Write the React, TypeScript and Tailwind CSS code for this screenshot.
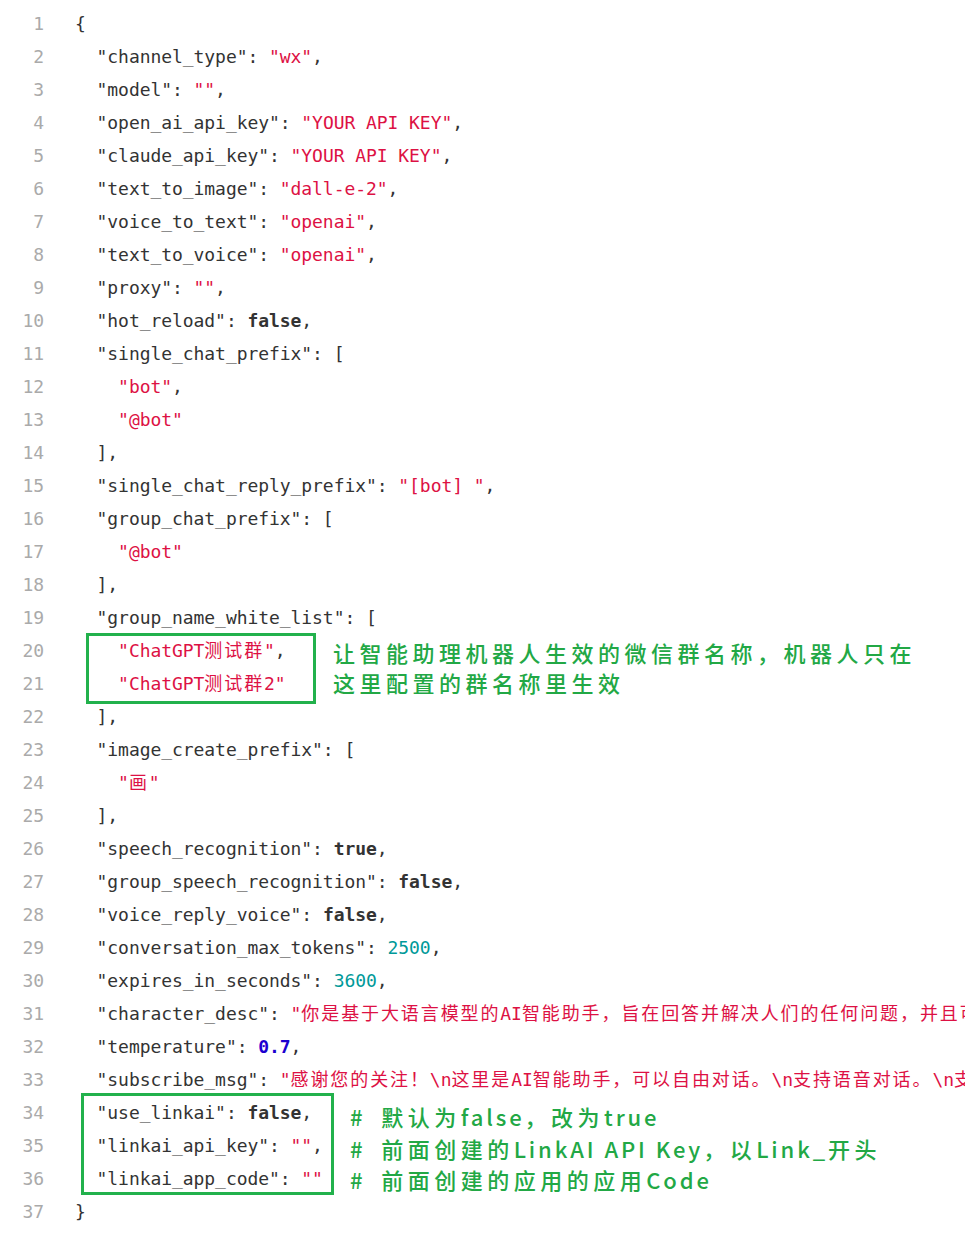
import React from 'react';

type Tok = { t: string; c?: 'k' | 's' | 'n' | 'b' | 'kw' };

// helpers for building tokens
const k = (t: string): Tok => ({ t, c: 'k' });
const s = (t: string): Tok => ({ t, c: 's' });
const n = (t: string): Tok => ({ t, c: 'n' });
const b = (t: string): Tok => ({ t, c: 'b' });
const kw = (t: string): Tok => ({ t, c: 'kw' });

const lines: Tok[][] = [
  [k('{')],
  [k('  "channel_type": '), s('"wx"'), k(',')],
  [k('  "model": '), s('""'), k(',')],
  [k('  "open_ai_api_key": '), s('"YOUR API KEY"'), k(',')],
  [k('  "claude_api_key": '), s('"YOUR API KEY"'), k(',')],
  [k('  "text_to_image": '), s('"dall-e-2"'), k(',')],
  [k('  "voice_to_text": '), s('"openai"'), k(',')],
  [k('  "text_to_voice": '), s('"openai"'), k(',')],
  [k('  "proxy": '), s('""'), k(',')],
  [k('  "hot_reload": '), kw('false'), k(',')],
  [k('  "single_chat_prefix": [')],
  [k('    '), s('"bot"'), k(',')],
  [k('    '), s('"@bot"')],
  [k('  ],')],
  [k('  "single_chat_reply_prefix": '), s('"[bot] "'), k(',')],
  [k('  "group_chat_prefix": [')],
  [k('    '), s('"@bot"')],
  [k('  ],')],
  [k('  "group_name_white_list": [')],
  [k('    '), s('"ChatGPT测试群"'), k(',')],
  [k('    '), s('"ChatGPT测试群2"')],
  [k('  ],')],
  [k('  "image_create_prefix": [')],
  [k('    '), s('"画"')],
  [k('  ],')],
  [k('  "speech_recognition": '), kw('true'), k(',')],
  [k('  "group_speech_recognition": '), kw('false'), k(',')],
  [k('  "voice_reply_voice": '), kw('false'), k(',')],
  [k('  "conversation_max_tokens": '), n('2500'), k(',')],
  [k('  "expires_in_seconds": '), n('3600'), k(',')],
  [k('  "character_desc": '), s('"你是基于大语言模型的AI智能助手，旨在回答并解决人们的任何问题，并且可以使用多种语言与人交流。"'), k(',')],
  [k('  "temperature": '), b('0.7'), k(',')],
  [k('  "subscribe_msg": '), s('"感谢您的关注！\\n这里是AI智能助手，可以自由对话。\\n支持语音对话。\\n支持图片输出，画字开头的消息将按要求创作图片。"'), k(',')],
  [k('  "use_linkai": '), kw('false'), k(',')],
  [k('  "linkai_api_key": '), s('""'), k(',')],
  [k('  "linkai_app_code": '), s('""')],
  [k('}')],
];

const colour: Record<string, string> = {
  k: 'text-[#333333]',
  s: 'text-[#dd1144]',
  n: 'text-[#009999]',
  b: 'text-[#1c00cf] font-bold',
  kw: 'text-[#333333] font-bold',
};

const CJK = /([\u3000-\u9fff\uff00-\uffef]+)/;

// split CJK runs so they get a bit of extra spacing (the original font is wider)
function renderText(text: string) {
  return text.split(CJK).map((p, i) =>
    CJK.test(p) ? (
      <span key={i} className="tracking-[1.9px]">{p}</span>
    ) : (
      <React.Fragment key={i}>{p}</React.Fragment>
    )
  );
}

// annotation text: latin pieces are tighter than the hanzi
function Note({ text }: { text: string }) {
  return (
    <div>
      {text.split(CJK).map((p, i) =>
        CJK.test(p) ? (
          <span key={i} className="tracking-[4.5px]">{p}</span>
        ) : (
          <span key={i} className="tracking-[2.9px]">{p}</span>
        )
      )}
    </div>
  );
}

export default function App() {
  return (
    <div className="relative w-[965px] h-[1245px] bg-white overflow-hidden pt-[7px]">
      {lines.map((toks, i) => (
        <div key={i} className="flex h-[33px] items-center whitespace-pre text-[18px] leading-[27px] tracking-[-0.06px] font-['DejaVu_Sans_Mono','Noto_Sans_CJK_SC',monospace]">
          <div className="w-[44px] shrink-0 text-right text-[#aaaaaa]">{i + 1}</div>
          <div className="ml-[31px]">
            {toks.map((tk, j) => (
              <span key={j} className={colour[tk.c || 'k']}>
                {renderText(tk.t)}
              </span>
            ))}
          </div>
        </div>
      ))}

      {/* annotation: group list */}
      <div className="absolute left-[86px] top-[633px] w-[230px] h-[71px] border-[3px] border-[#22b14c]" />
      <div className="absolute left-[333px] top-[637px] text-[22px] leading-[30px] font-medium text-[#22a845] font-['Noto_Sans_CJK_SC',sans-serif] whitespace-pre">
        <Note text="让智能助理机器人生效的微信群名称，机器人只在" />
        <Note text="这里配置的群名称里生效" />
      </div>

      {/* annotation: linkai */}
      <div className="absolute left-[81px] top-[1093px] w-[253px] h-[102px] border-[3px] border-[#22b14c]" />
      <div className="absolute left-[350px] top-[1101px] text-[22px] leading-[31.5px] font-medium text-[#22a845] font-['Noto_Sans_CJK_SC',sans-serif] whitespace-pre">
        <Note text="#  默认为false，改为true" />
        <Note text="#  前面创建的LinkAI API Key，以Link_开头" />
        <Note text="#  前面创建的应用的应用Code" />
      </div>
    </div>
  );
}
